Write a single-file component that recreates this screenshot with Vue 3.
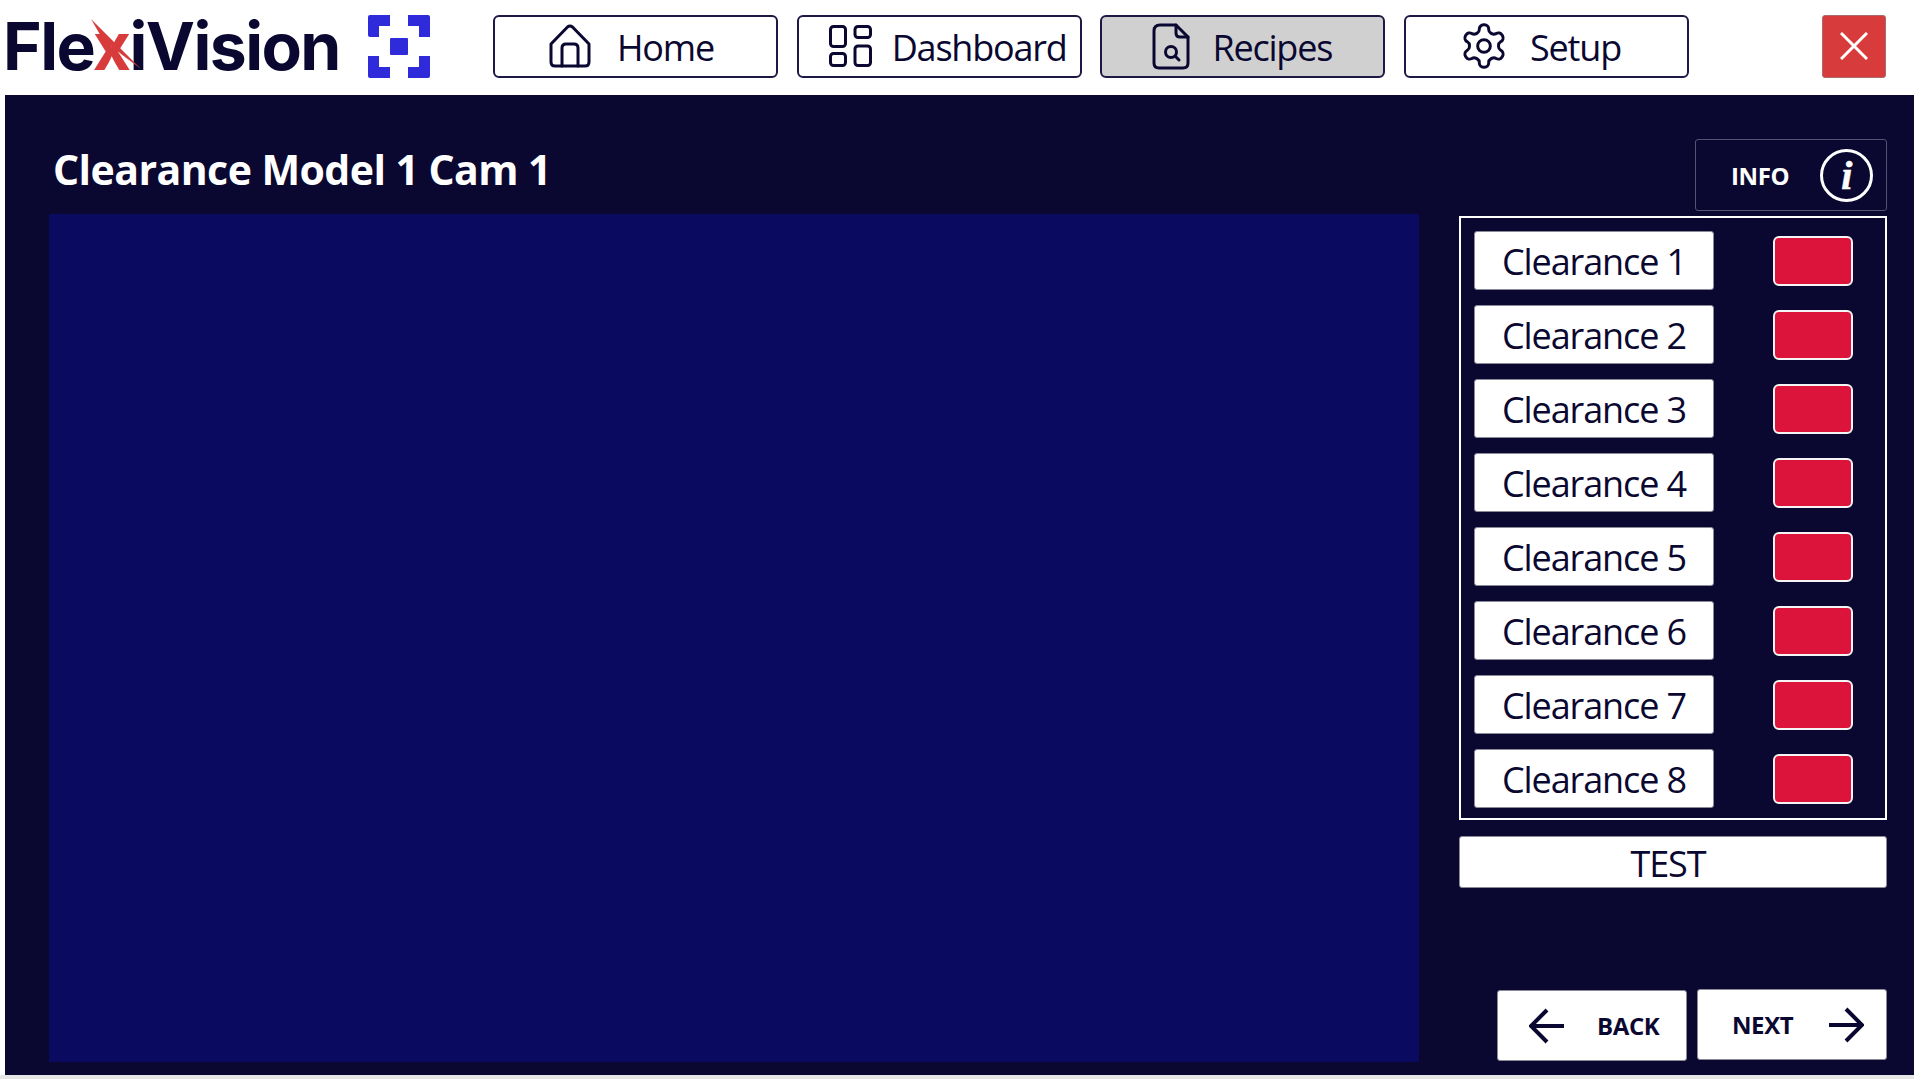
<template>
  <div class="app">
    <header class="topbar">
      <div class="logo">
        <span class="logo-text">Fle<span class="logo-x">x<svg class="spike" viewBox="0 0 50 50"><path d="M0 0 L50 50 L30 35 L11 19 Z" /></svg></span>iVision</span>
        <svg class="logo-mark" viewBox="0 0 62 63">
          <path d="M0 2 Q0 0 2 0 H22 V11 H11 V22 H2 Q0 22 0 20 Z" />
          <path d="M40 0 H60 Q62 0 62 2 V22 H51 V11 H40 Z" />
          <path d="M0 41 H11 V52 H22 V63 H2 Q0 63 0 61 Z" />
          <path d="M51 41 H62 V61 Q62 63 60 63 H40 V52 H51 Z" />
          <rect x="22" y="23" width="18" height="17" rx="1" />
        </svg>
      </div>
      <nav class="nav">
        <button class="nav-btn home">
          <svg class="icon" width="42" height="44" viewBox="0 0 42 44">
            <path d="M2 20 L18.5 3 Q21 1 23.5 3 L40 20 V38 Q40 42 36 42 H6 Q2 42 2 38 Z" />
            <path d="M13 42 V24 Q13 20 17 20 H25 Q29 20 29 24 V42" />
          </svg>
          <span>Home</span>
        </button>
        <button class="nav-btn dash">
          <svg class="icon" width="43" height="42" viewBox="0 0 43 42">
            <rect x="1.5" y="1.5" width="15" height="20" rx="3" />
            <rect x="26" y="1.5" width="15.5" height="11" rx="3" />
            <rect x="1.5" y="28.5" width="15" height="12" rx="3" />
            <rect x="26" y="21" width="15.5" height="19.5" rx="3" />
          </svg>
          <span>Dashboard</span>
        </button>
        <button class="nav-btn recipes active">
          <svg class="icon" width="38" height="47" viewBox="0 0 38 47">
            <path d="M8 2 H24 L36 14 V40 Q36 45 31 45 H7 Q2 45 2 40 V8 Q2 2 8 2 Z" />
            <path d="M24 2 V10 Q24 14 28 14 H36" />
            <circle cx="19" cy="29" r="5.5" />
            <path d="M23 33 L27 37" />
          </svg>
          <span>Recipes</span>
        </button>
        <button class="nav-btn setup">
          <svg class="icon gear" width="44" height="46" viewBox="1.6 1.4 20.8 21.2">
            <path d="M12.22 2h-.44a2 2 0 0 0-2 2v.18a2 2 0 0 1-1 1.73l-.43.25a2 2 0 0 1-2 0l-.15-.08a2 2 0 0 0-2.73.73l-.22.38a2 2 0 0 0 .73 2.73l.15.1a2 2 0 0 1 1 1.72v.51a2 2 0 0 1-1 1.74l-.15.09a2 2 0 0 0-.73 2.73l.22.38a2 2 0 0 0 2.73.73l.15-.08a2 2 0 0 1 2 0l.43.25a2 2 0 0 1 1 1.73V20a2 2 0 0 0 2 2h.44a2 2 0 0 0 2-2v-.18a2 2 0 0 1 1-1.73l.43-.25a2 2 0 0 1 2 0l.15.08a2 2 0 0 0 2.73-.73l.22-.39a2 2 0 0 0-.73-2.73l-.15-.08a2 2 0 0 1-1-1.74v-.5a2 2 0 0 1 1-1.74l.15-.09a2 2 0 0 0 .73-2.73l-.22-.38a2 2 0 0 0-2.73-.73l-.15.08a2 2 0 0 1-2 0l-.43-.25a2 2 0 0 1-1-1.73V4a2 2 0 0 0-2-2z" />
            <circle cx="12" cy="12" r="3" />
          </svg>
          <span>Setup</span>
        </button>
      </nav>
      <button class="close-btn">
        <svg width="28" height="28" viewBox="0 0 28 28"><path d="M1 1 L27 27 M27 1 L1 27" /></svg>
      </button>
    </header>

    <main class="main">
      <section class="left">
        <h1 class="title">Clearance Model 1 Cam 1</h1>
        <div class="canvas"></div>
      </section>
      <aside class="side">
        <button class="info-btn">
          <span>INFO</span>
          <span class="info-circle">i</span>
        </button>
        <div class="panel">
          <div v-for="n in 8" :key="n" class="row">
            <button class="clear-btn">Clearance {{ n }}</button>
            <span class="lamp"></span>
          </div>
        </div>
        <button class="test-btn">TEST</button>
        <div class="steps">
          <button class="step back">
            <svg width="35" height="36" viewBox="0 0 35 36"><path d="M35 18 H2 M18 2 L2 18 L18 34" /></svg>
            <span>BACK</span>
          </button>
          <button class="step next">
            <span>NEXT</span>
            <svg width="35" height="36" viewBox="0 0 35 36"><path d="M0 18 H33 M17 2 L33 18 L17 34" /></svg>
          </button>
        </div>
      </aside>
    </main>
  </div>
</template>

<script setup>
</script>

<style>
html, body {
  margin: 0;
  background: #fff;
}
</style>

<style scoped>
.app {
  display: flex;
  flex-direction: column;
  height: 1079px;
  width: 1914px;
  overflow: hidden;
  font-family: "Open Sans", "Noto Sans", sans-serif;
  color: #0a0830;
  background: linear-gradient(#fff 1075px, #e6e6e6 1075px);
}

button {
  font-family: inherit;
  color: inherit;
  cursor: pointer;
  box-sizing: border-box;
}

.topbar {
  display: flex;
  align-items: center;
  height: 95px;
  flex: none;
  padding-bottom: 3px;
  box-sizing: border-box;
}

.logo {
  display: flex;
  align-items: center;
  width: 493px;
  flex: none;
  padding-left: 3px;
  box-sizing: border-box;
}

.logo-text {
  font-family: Inter, "Liberation Sans", sans-serif;
  font-weight: 700;
  font-size: 66px;
  line-height: 1;
  letter-spacing: -1.6px;
  width: 365px;
  flex: none;
  white-space: nowrap;
}

.logo-x {
  position: relative;
  color: #d83b3b;
}

.spike {
  position: absolute;
  left: -2px;
  top: 13px;
  width: 50px;
  height: 50px;
  fill: #d83b3b;
}

.logo-mark {
  width: 62px;
  height: 63px;
  fill: #2f2bdb;
  flex: none;
}

.nav {
  display: flex;
  gap: 18.7px;
}

.nav-btn {
  display: flex;
  align-items: center;
  width: 285px;
  height: 63px;
  background: #fff;
  border: 2px solid #1c1a44;
  border-radius: 6px;
  font-size: 36px;
  letter-spacing: -1.2px;
  padding: 0;
}

.nav-btn span {
  padding-top: 2px;
}

.nav-btn.active {
  background: #d0d0d0;
}

.nav-btn.home { padding-left: 54px; gap: 26px; }
.nav-btn.dash { padding-left: 30px; gap: 20px; }
.nav-btn.recipes { padding-left: 50px; gap: 22px; }
.nav-btn.setup { padding-left: 56px; gap: 24px; }

.icon {
  flex: none;
  fill: none;
  stroke: #0a0830;
  stroke-width: 3;
  stroke-linejoin: round;
  stroke-linecap: round;
}

.icon.gear {
  stroke-width: 1.4;
}

.close-btn {
  display: flex;
  align-items: center;
  justify-content: center;
  width: 64px;
  height: 63px;
  margin-left: 132.5px;
  padding: 0;
  background: #d83b3b;
  border: 1px solid #a86a6a;
  border-radius: 3px;
}

.close-btn svg {
  fill: none;
  stroke: #fff;
  stroke-width: 3;
}

.main {
  display: flex;
  flex: 1;
  gap: 40px;
  min-height: 0;
  margin: 0 0 4px 5px;
  padding: 0 27px 13px 44px;
  background: #0a0830;
}

.left {
  display: flex;
  flex-direction: column;
  width: 1370px;
  flex: none;
}

.title {
  height: 119px;
  flex: none;
  margin: 0;
  padding: 46px 0 0 4px;
  box-sizing: border-box;
  color: #fff;
  font-size: 41px;
  font-weight: 700;
  letter-spacing: -0.55px;
  line-height: 56px;
}

.canvas {
  flex: 1;
  background: #090a60;
}

.side {
  display: flex;
  flex-direction: column;
  flex: 1;
  padding: 44px 0 1px;
}

.info-btn {
  display: flex;
  align-items: center;
  align-self: flex-end;
  width: 192px;
  height: 72px;
  padding: 0 13px 0 35px;
  justify-content: space-between;
  background: transparent;
  border: 1px solid #55546e;
  border-radius: 3px;
  color: #fff;
  font-size: 24px;
  font-weight: 700;
  letter-spacing: -0.4px;
}

.info-circle {
  display: flex;
  align-items: center;
  justify-content: center;
  width: 53px;
  height: 53px;
  box-sizing: border-box;
  border: 3px solid #fff;
  border-radius: 50%;
  font-family: "Liberation Serif", serif;
  font-style: italic;
  font-size: 40px;
  -webkit-text-stroke: 0.6px #fff;
}

.panel {
  display: flex;
  flex-direction: column;
  gap: 15px;
  margin-top: 5px;
  padding: 13px 32px 10px 13px;
  border: 2px solid #fff;
}

.row {
  display: flex;
  align-items: center;
  justify-content: space-between;
}

.clear-btn {
  width: 240px;
  height: 59px;
  padding: 3px 0 0;
  background: #fff;
  border: 1px solid #8a8a96;
  border-radius: 3px;
  font-size: 36px;
  letter-spacing: -1.1px;
  line-height: 1;
}

.lamp {
  width: 80px;
  height: 50px;
  box-sizing: border-box;
  background: #dc143c;
  border: 2px solid #f4f4f4;
  border-radius: 6px;
}

.test-btn {
  height: 52px;
  margin-top: 16px;
  padding: 4px 10px 0 0;
  background: #fff;
  border: 1px solid #8a8a96;
  border-radius: 3px;
  font-size: 36px;
  letter-spacing: -1.1px;
  line-height: 1;
}

.steps {
  display: flex;
  justify-content: flex-end;
  align-items: flex-end;
  gap: 10px;
  margin-top: auto;
}

.step {
  display: flex;
  align-items: center;
  width: 190px;
  height: 71px;
  background: #fff;
  border: 1px solid #8a8a96;
  border-radius: 3px;
  font-size: 24px;
  font-weight: 700;
  letter-spacing: -0.4px;
}

.step svg {
  flex: none;
  fill: none;
  stroke: #0a0830;
  stroke-width: 4;
}

.step.back {
  padding: 0 0 0 31px;
  gap: 33px;
}

.step.next {
  padding: 0 0 0 34px;
  gap: 36px;
  margin-bottom: 1px;
}
</style>
